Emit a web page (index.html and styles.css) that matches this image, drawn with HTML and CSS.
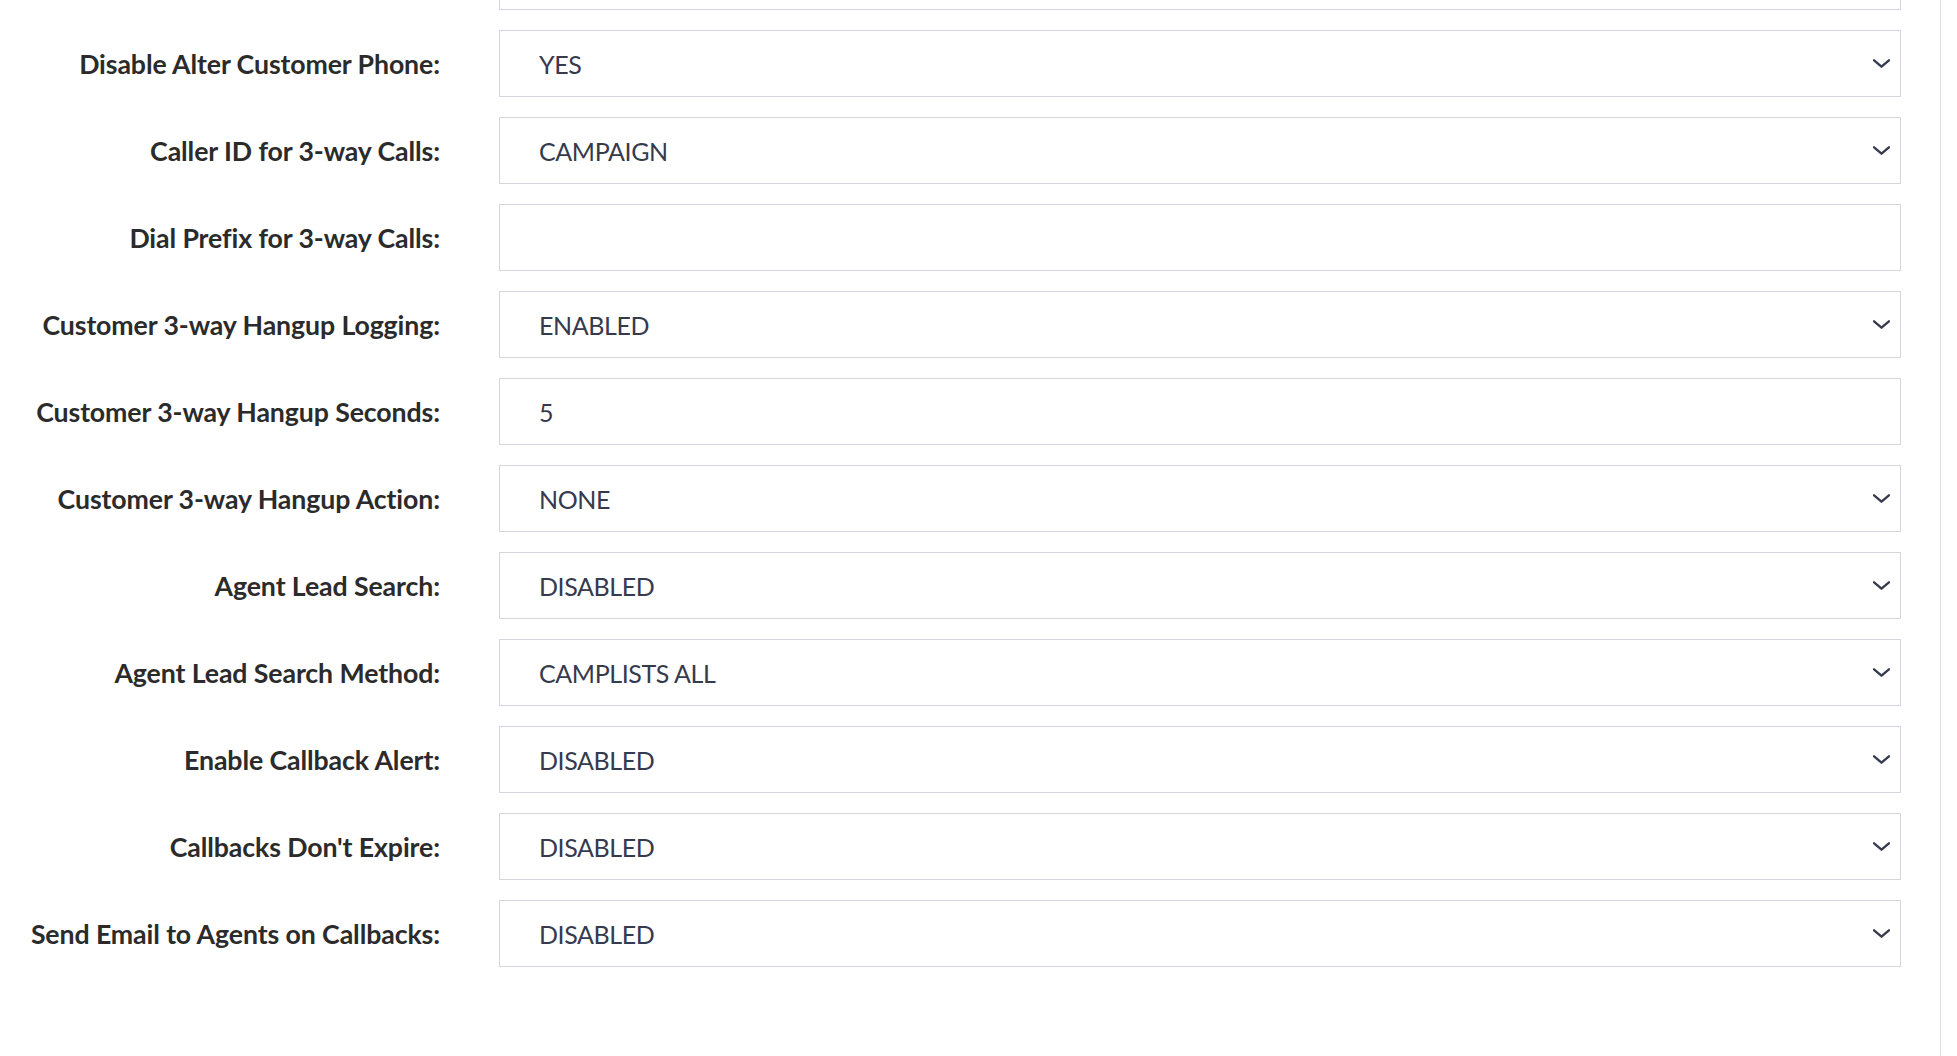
FILE: index.html
```html
<!DOCTYPE html>
<html>
<head>
<meta charset="utf-8">
<link rel="stylesheet" href="styles.css">
</head>
<body>
<div class="page">
  <form class="form">
    <div class="row"><span class="lbl"></span><div class="field select"><span class="val"></span></div></div>
    <div class="row"><label class="lbl">Disable Alter Customer Phone:</label><div class="field select"><span class="val">YES</span><svg class="chev" viewBox="0 0 16 8"><path d="M1 1 L8 7 L15 1"/></svg></div></div>
    <div class="row"><label class="lbl">Caller ID for 3-way Calls:</label><div class="field select"><span class="val">CAMPAIGN</span><svg class="chev" viewBox="0 0 16 8"><path d="M1 1 L8 7 L15 1"/></svg></div></div>
    <div class="row"><label class="lbl">Dial Prefix for 3-way Calls:</label><div class="field"><span class="val"></span></div></div>
    <div class="row"><label class="lbl">Customer 3-way Hangup Logging:</label><div class="field select"><span class="val">ENABLED</span><svg class="chev" viewBox="0 0 16 8"><path d="M1 1 L8 7 L15 1"/></svg></div></div>
    <div class="row"><label class="lbl">Customer 3-way Hangup Seconds:</label><div class="field"><span class="val">5</span></div></div>
    <div class="row"><label class="lbl">Customer 3-way Hangup Action:</label><div class="field select"><span class="val">NONE</span><svg class="chev" viewBox="0 0 16 8"><path d="M1 1 L8 7 L15 1"/></svg></div></div>
    <div class="row"><label class="lbl">Agent Lead Search:</label><div class="field select"><span class="val">DISABLED</span><svg class="chev" viewBox="0 0 16 8"><path d="M1 1 L8 7 L15 1"/></svg></div></div>
    <div class="row"><label class="lbl">Agent Lead Search Method:</label><div class="field select"><span class="val">CAMPLISTS ALL</span><svg class="chev" viewBox="0 0 16 8"><path d="M1 1 L8 7 L15 1"/></svg></div></div>
    <div class="row"><label class="lbl">Enable Callback Alert:</label><div class="field select"><span class="val">DISABLED</span><svg class="chev" viewBox="0 0 16 8"><path d="M1 1 L8 7 L15 1"/></svg></div></div>
    <div class="row"><label class="lbl">Callbacks Don't Expire:</label><div class="field select"><span class="val">DISABLED</span><svg class="chev" viewBox="0 0 16 8"><path d="M1 1 L8 7 L15 1"/></svg></div></div>
    <div class="row"><label class="lbl">Send Email to Agents on Callbacks:</label><div class="field select"><span class="val">DISABLED</span><svg class="chev" viewBox="0 0 16 8"><path d="M1 1 L8 7 L15 1"/></svg></div></div>
  </form>
</div>
</body>
</html>
```

FILE: styles.css
```css
html, body {
  margin: 0;
  padding: 0;
  background: #ffffff;
  height: 100%;
  overflow: hidden;
}
body {
  font-family: "Lato", "Liberation Sans", sans-serif;
}
.page {
  width: 1941px;
  height: 1056px;
  border-right: 1px solid #dce3e9;
  box-sizing: border-box;
  overflow: hidden;
}
.form {
  display: flex;
  flex-direction: column;
  gap: 20px;
  margin-top: -57px;
}
.row {
  display: flex;
  align-items: center;
}
.lbl {
  width: 440px;
  flex: none;
  text-align: right;
  font-weight: 700;
  font-size: 26.7px;
  letter-spacing: -0.1px;
  color: #2b2b2b;
  padding-right: 59px;
  box-sizing: content-box;
}
.field {
  width: 1402px;
  height: 67px;
  box-sizing: border-box;
  border: 1px solid #d5d5dd;
  display: flex;
  align-items: center;
  padding: 0 10px 0 39px;
  background: #fff;
}
.val {
  flex: 1;
  font-size: 25px;
  letter-spacing: -0.4px;
  color: #353a4d;
}
.chev {
  width: 17px;
  height: 9px;
  fill: none;
  stroke: #353a4d;
  stroke-width: 2.2;
  stroke-linecap: round;
  stroke-linejoin: round;
}
```
